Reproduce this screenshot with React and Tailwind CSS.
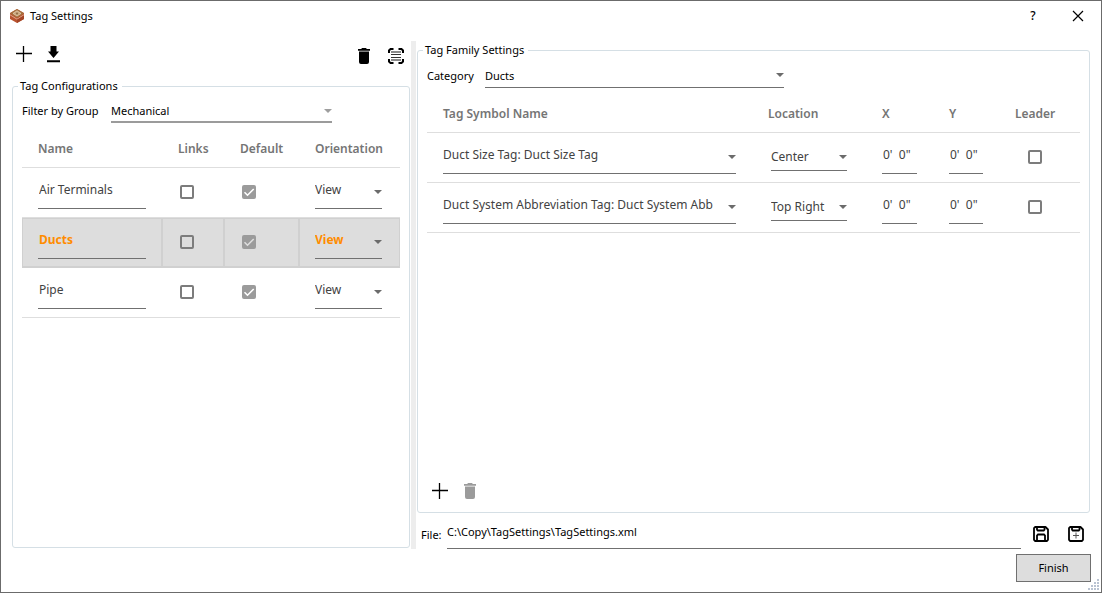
import { useState } from "react";

const headCell = "border-b border-[#dedede] px-4 text-left text-[12px] font-semibold text-[#757575]";

function Caret({ className = "", light = false }) {
  return (
    <svg
      viewBox="0 0 8 4"
      aria-hidden="true"
      className={`pointer-events-none absolute h-1 w-2 ${light ? "fill-[#9e9e9e]" : "fill-[#6b6b6b]"} ${className}`}
    >
      <path d="M0 0h8L4 4z" />
    </svg>
  );
}

function Picker({ label, id, value, options, className = "", wrap = "", caret = "right-0 top-3.5", light }) {
  return (
    <div className={`relative ${wrap}`}>
      <select
        id={id}
        aria-label={label}
        defaultValue={value}
        className={`block w-full appearance-none truncate rounded-none bg-transparent outline-none ${className}`}
      >
        {options.map((o) => (
          <option key={o}>{o}</option>
        ))}
      </select>
      <Caret className={caret} light={light} />
    </div>
  );
}

function Check({ label, checked = false, disabled = false, selected = false }) {
  const [on, setOn] = useState(checked);
  return (
    <span className="relative block h-3.5 w-3.5">
      <input
        type="checkbox"
        aria-label={label}
        checked={on}
        disabled={disabled}
        onChange={(e) => setOn(e.target.checked)}
        className="block h-3.5 w-3.5 appearance-none rounded-[2px] border-2 border-[#7c7c7c] checked:border-[#9b9b9b] checked:bg-[#9b9b9b]"
      />
      {on && (
        <svg viewBox="0 0 14 14" aria-hidden="true" className="pointer-events-none absolute inset-0 h-3.5 w-3.5">
          <path d="M2.500 7.200 5.500 10.200 11.700 4" fill="none" stroke={selected ? "#dddddd" : "#ffffff"} strokeWidth="1.6" />
        </svg>
      )}
    </span>
  );
}

function PlusIcon() {
  return (
    <svg viewBox="0 0 16 16" className="h-4 w-4" aria-hidden="true">
      <path d="M7.500 0v16M0 7.500h16" stroke="currentColor" strokeWidth="1.300" fill="none" />
    </svg>
  );
}

function TrashIcon() {
  return (
    <svg viewBox="0 0 12 16" className="h-4 w-3" fill="currentColor" aria-hidden="true">
      <path d="M0 1h3.200L4 0h4l.8 1H12v1.700H0zM1 3.600h10V14a2 2 0 0 1-2 2H3a2 2 0 0 1-2-2z" />
    </svg>
  );
}

function DownloadIcon() {
  return (
    <svg viewBox="0 0 13 17" className="h-[17px] w-[13px]" fill="currentColor" aria-hidden="true">
      <path d="M3.500 0h6v5.500H12L6.500 12 1 5.500h2.500zM0 14.300h13V16.300H0z" />
    </svg>
  );
}

function ScanIcon() {
  return (
    <svg viewBox="0 0 16 16" className="h-4 w-4" fill="none" stroke="currentColor" aria-hidden="true">
      <path d="M1 5V2.500L2.500 1H5.500M10.500 1h3L15 2.500V5M15 11v2.500L13.500 15h-3M5.500 15h-3L1 13.500V11" strokeWidth="2" />
      <path d="M3 4h10M3 12h10" strokeWidth="2" stroke="#8a8a8a" />
      <path d="M3 6.500h10M3 9.500h10" strokeWidth="1" stroke="#333333" />
    </svg>
  );
}

function SaveIcon({ plus = false }) {
  return (
    <svg viewBox="0 0 16 16" className="h-4 w-4" fill="none" stroke="currentColor" strokeWidth="1.800" aria-hidden="true">
      <path d="M2.200 1H12.500L15 3.500V13.800L13.800 15H2.200L1 13.800V2.200z" strokeLinejoin="round" />
      <path d="M4 1v2.600l.8.9h5.900l.8-.9V1" />
      {plus ? (
        <path d="M8 6.500v6M5 9.500h6" strokeWidth="1" stroke="#555555" />
      ) : (
        <path d="M4 15V9.600L5 8.500h6l1 1.100V15" />
      )}
    </svg>
  );
}

function Logo() {
  return (
    <svg viewBox="0 0 14 14" className="h-3.5 w-3.5" aria-hidden="true">
      <path d="M7 0 14 4v6L7 14 0 10V4z" fill="#b9532f" />
      <path d="M7 0 14 4.200 7 8.800 0 4.200z" fill="#a5713f" />
      <path d="M7 1.800 11 4.400 7 7 3 4.400z" fill="#c9a67c" stroke="#ead6bb" strokeWidth=".7" />
      <circle cx="7" cy="4.400" r="1" fill="#8f6a45" />
      <path d="M0 5.800 7 10.200l7-4.400" fill="none" stroke="#e9b9a3" strokeWidth=".8" />
      <path d="M7 10.800V14l7-4V6.500z" fill="#a34526" />
    </svg>
  );
}

function ConfigRow({ name, selected = false }) {
  const cell = selected
    ? "border-b border-[#d0d0d0] bg-[#dddddd] shadow-[inset_0_0_0_1px_#d0d0d0]"
    : "border-b border-[#dedede]";
  const text = selected ? "font-bold text-[#ff8c00]" : "text-[#424242]";
  const field = `h-[33px] border-b border-[#707070] text-[12px] ${text}`;
  return (
    <tr className="h-[50px]">
      <td className={`px-4 ${cell}`}>
        <input
          aria-label="Name"
          defaultValue={name}
          className={`block w-full bg-transparent pb-1.5 pl-px outline-none ${field}`}
        />
      </td>
      <td className={`pb-0.5 pl-[18px] ${cell}`}>
        <Check label={`${name} links`} />
      </td>
      <td className={`pb-0.5 pl-[18px] ${cell}`}>
        <Check label={`${name} default`} checked disabled selected={selected} />
      </td>
      <td className={`pl-4 pr-[18px] ${cell}`}>
        <Picker label="Orientation" value="View" options={["View", "Model"]} className={`pb-1 ${field}`} />
      </td>
    </tr>
  );
}

function TagRow({ name, location }) {
  const cell = "border-b border-[#dedede]";
  const field = "h-[33px] border-b border-[#707070] text-[12px]";
  return (
    <tr className="h-[50px] text-[#424242]">
      <td className={`px-4 ${cell}`}>
        <Picker label="Tag symbol name" value={name} options={[name]} className={`pb-1 pr-4 ${field}`} />
      </td>
      <td className={`px-[19px] ${cell}`}>
        <Picker
          label="Location"
          value={location}
          options={["Center", "Top Right"]}
          className="h-[26px] border-b border-[#707070] text-[12px]"
          caret="right-0 top-2.5"
        />
      </td>
      {["X", "Y"].map((axis) => (
        <td key={axis} className={`px-4 ${cell}`}>
          <input
            aria-label={axis}
            defaultValue={"0'  0\""}
            className={`block w-full bg-transparent pb-1.5 pl-px outline-none ${field}`}
          />
        </td>
      ))}
      <td className={`pb-0.5 pl-[29px] ${cell}`}>
        <Check label={`${name} leader`} />
      </td>
    </tr>
  );
}

function ResizeGrip() {
  const dots = [[9, 0], [6, 3], [9, 3], [3, 6], [6, 6], [9, 6], [0, 9], [3, 9], [6, 9], [9, 9]];
  return (
    <svg viewBox="0 0 11 11" className="absolute bottom-0.5 right-0.5 h-[11px] w-[11px]" aria-hidden="true">
      {dots.map(([x, y]) => (
        <rect key={`${x}-${y}`} x={x} y={y} width="2" height="2" fill="#b9c3d2" />
      ))}
    </svg>
  );
}

export default function App() {
  return (
    <div className="relative flex h-screen flex-col border border-[#6b6b6b] bg-white font-['Noto_Sans','Open_Sans',sans-serif] text-[11px] leading-4 text-black">
      <header className="flex h-[30px] shrink-0 items-center pl-[9px] pr-[17px]">
        <Logo />
        <h1 className="ml-1.5 flex-1">Tag Settings</h1>
        <button type="button" aria-label="Help" className="w-4 text-center text-[12px] font-medium">
          ?
        </button>
        <button type="button" aria-label="Close" className="ml-[31px]">
          <svg viewBox="0 0 12 12" className="h-3 w-3" aria-hidden="true">
            <path d="M1 1l10 10M11 1L1 11" stroke="currentColor" strokeWidth="1.200" />
          </svg>
        </button>
      </header>

      <main className="mt-2.5 grid min-h-0 flex-1 grid-cols-[398fr_5px_673fr] gap-x-px pl-[11px] pr-[11px]">
        <section className="flex min-w-0 flex-col pb-px">
          <div className="flex h-[37px] items-start pl-1 pr-1.5 pt-[5px]">
            <button type="button" aria-label="Add configuration"><PlusIcon /></button>
            <button type="button" aria-label="Import" className="ml-[15px]"><DownloadIcon /></button>
            <button type="button" aria-label="Delete configuration" className="ml-auto pt-0.5"><TrashIcon /></button>
            <button type="button" aria-label="Scan" className="ml-[18px] pt-0.5"><ScanIcon /></button>
          </div>
          <fieldset className="min-w-0 flex-1 rounded-[3px] border border-[#d5dfe5] px-[9px]">
            <legend className="-ml-1 px-0.5 pr-1">Tag Configurations</legend>
            <div className="flex h-[29px] items-start">
              <label htmlFor="group" className="w-[89px] shrink-0 pt-[9px] whitespace-nowrap">Filter by Group</label>
              <Picker
                id="group"
                value="Mechanical"
                options={["Mechanical", "Electrical"]}
                wrap="w-[221px]"
                className="h-[29px] border-b-2 border-[#9b9b9b] pt-1.5"
                caret="right-0 top-[15px]"
                light
              />
            </div>
            <table className="mt-[7px] w-full table-fixed border-separate border-spacing-0">
              <colgroup>
                <col />
                <col className="w-[62px]" />
                <col className="w-[75px]" />
                <col className="w-[101px]" />
              </colgroup>
              <thead>
                <tr className="h-[38px]">
                  <th className={headCell}>Name</th>
                  <th className={headCell}>Links</th>
                  <th className={headCell}>Default</th>
                  <th className={headCell}>Orientation</th>
                </tr>
              </thead>
              <tbody>
                <ConfigRow name="Air Terminals" />
                <ConfigRow name="Ducts" selected />
                <ConfigRow name="Pipe" />
              </tbody>
            </table>
          </fieldset>
        </section>

        <div className="bg-[#ededed]" />

        <section className="flex min-w-0 flex-col pt-px">
          <fieldset className="flex min-h-0 min-w-0 flex-1 flex-col rounded-[3px] border border-[#d5dfe5] px-[9px]">
            <legend className="-ml-1 px-0.5 pr-1">Tag Family Settings</legend>
            <div className="flex h-[30px] items-start">
              <label htmlFor="category" className="w-[58px] shrink-0 pt-2.5">Category</label>
              <Picker
                id="category"
                value="Ducts"
                options={["Ducts", "Pipes"]}
                wrap="w-[299px]"
                className="h-[30px] border-b border-[#707070] pt-1.5"
                caret="right-0 top-[15px]"
              />
            </div>
            <table className="mt-[7px] w-full table-fixed border-separate border-spacing-0">
              <colgroup>
                <col />
                <col className="w-[114px]" />
                <col className="w-[67px]" />
                <col className="w-[66px]" />
                <col className="w-[81px]" />
              </colgroup>
              <thead>
                <tr className="h-[38px]">
                  <th className={headCell}>Tag Symbol Name</th>
                  <th className={headCell}>Location</th>
                  <th className={headCell}>X</th>
                  <th className={headCell}>Y</th>
                  <th className={headCell}>Leader</th>
                </tr>
              </thead>
              <tbody>
                <TagRow name="Duct Size Tag: Duct Size Tag" location="Center" />
                <TagRow name="Duct System Abbreviation Tag: Duct System Abb" location="Top Right" />
              </tbody>
            </table>
            <div className="mt-auto flex gap-4 pb-[13px] pl-[5px]">
              <button type="button" aria-label="Add tag"><PlusIcon /></button>
              <button type="button" aria-label="Delete tag" disabled className="text-[#9b9b9b]"><TrashIcon /></button>
            </div>
          </fieldset>
          <div className="flex h-9 items-end pl-1 pr-1.5">
            <label htmlFor="file" className="w-[26px] shrink-0 pb-1.5">File:</label>
            <input
              id="file"
              defaultValue="C:\Copy\TagSettings\TagSettings.xml"
              className="h-8 min-w-0 flex-1 border-b border-[#707070] bg-transparent pb-0.5 outline-none"
            />
            <button type="button" aria-label="Save" className="ml-3 pb-[7px]"><SaveIcon /></button>
            <button type="button" aria-label="Save as" className="ml-[19px] pb-[7px]"><SaveIcon plus /></button>
          </div>
        </section>
      </main>

      <footer className="mt-[5px] flex shrink-0 justify-end pb-2.5 pr-2.5">
        <button type="button" className="h-7 w-[75px] border border-[#707070] bg-[#dddddd]">Finish</button>
      </footer>
      <ResizeGrip />
    </div>
  );
}
